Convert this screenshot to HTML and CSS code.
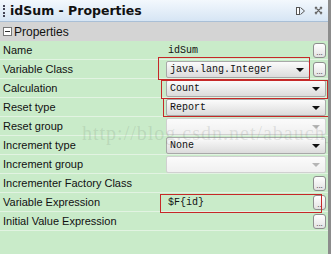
FILE: index.html
```html
<!DOCTYPE html>
<html lang="en">
<head>
    <meta charset="UTF-8">
    <title>idSum - Properties</title>
    <link rel="stylesheet" href="styles.css">
</head>
<body>
    <div class="panel">
        <div class="titlebar">
            <span class="grip"></span>
            <span class="title">idSum - Properties</span>
            <span class="tools">
                <svg width="10" height="10" viewBox="0 0 10 10"><rect x="0.5" y="1.5" width="3" height="7" fill="#fff" stroke="#555"/><path d="M4.5 1.5 L8.5 5 L4.5 8.5" fill="none" stroke="#555"/></svg>
                <svg width="9" height="9" viewBox="0 0 9 9"><path d="M1 1 L8 8 M8 1 L1 8 M1 3 L3 1 M6 8 L8 6 M6 1 L8 3 M1 6 L3 8" stroke="#666" stroke-width="1.2"/></svg>
            </span>
        </div>
        <div class="section"><span class="minus"></span>Properties</div>

        <div class="rows">
            <div class="row">
                <div class="label">Name</div>
                <div class="value"><span class="text">idSum</span><span class="dots">...</span></div>
            </div>
            <div class="row">
                <div class="label">Variable Class</div>
                <div class="value"><span class="combo">java.lang.Integer<i class="arrow"></i></span><span class="dots">...</span></div>
            </div>
            <div class="row">
                <div class="label">Calculation</div>
                <div class="value"><span class="combo">Count<i class="arrow"></i></span></div>
            </div>
            <div class="row">
                <div class="label">Reset type</div>
                <div class="value"><span class="combo">Report<i class="arrow"></i></span></div>
            </div>
            <div class="row">
                <div class="label">Reset group</div>
                <div class="value"><span class="combo disabled"><i class="arrow"></i></span></div>
            </div>
            <div class="row">
                <div class="label">Increment type</div>
                <div class="value"><span class="combo">None<i class="arrow"></i></span></div>
            </div>
            <div class="row">
                <div class="label">Increment group</div>
                <div class="value"><span class="combo disabled"><i class="arrow"></i></span></div>
            </div>
            <div class="row">
                <div class="label">Incrementer Factory Class</div>
                <div class="value"><span class="text"></span><span class="dots">...</span></div>
            </div>
            <div class="row">
                <div class="label">Variable Expression</div>
                <div class="value"><span class="text">$F{id}</span><span class="dots">..</span></div>
            </div>
            <div class="row">
                <div class="label">Initial Value Expression</div>
                <div class="value"><span class="text"></span><span class="dots">...</span></div>
            </div>
        </div>

        <!-- marcas vermelhas por cima -->
        <div class="mark mark-class"></div>
        <div class="mark mark-calc"></div>
        <div class="mark mark-reset"></div>
        <div class="mark mark-expr"></div>
        <div class="watermark">http://blog.csdn.net/abauch_d</div>
    </div>
</body>
</html>
```

FILE: styles.css
```css
body {
    margin: 0;
    padding: 0;
    font-family: "DejaVu Sans", Tahoma, sans-serif;
    background-color: #c9ebc9;
}
.panel {
    position: relative;
    width: 331px;
    height: 254px;
    overflow: hidden;
    background-color: #c9ebc9;
    border-right: 3px solid #8c8c8c;
    box-sizing: border-box;
}
.titlebar {
    height: 22px;
    display: flex;
    align-items: center;
    background: linear-gradient(#f3f8fd, #d6e5f4);
    border-bottom: 1px solid #a9bfd6;
    box-sizing: border-box;
}
.grip {
    width: 2px;
    height: 12px;
    margin: 0 5px 0 3px;
    border-left: 2px dotted #445;
    box-sizing: border-box;
}
.title {
    font-weight: bold;
    font-size: 12.5px;
    color: #111;
    flex: 1;
}
.tools {
    display: flex;
    align-items: center;
    gap: 8px;
    margin-right: 5px;
}
.section {
    height: 19px;
    display: flex;
    align-items: center;
    background-color: #d4d4d4;
    font-family: "Liberation Sans", Arial, sans-serif;
    font-size: 12px;
    color: #111;
}
.minus {
    position: relative;
    width: 9px;
    height: 9px;
    margin: 0 2px 0 3px;
    border: 1px solid #777;
    background-color: #fff;
    box-sizing: border-box;
}
.minus::after {
    content: "";
    position: absolute;
    left: 1px;
    right: 1px;
    top: 3px;
    height: 1px;
    background-color: #333;
}
.row {
    display: flex;
    height: 19px;
    border-bottom: 1px solid #e2f3e2;
    box-sizing: border-box;
}
.label {
    width: 161px;
    padding-left: 3px;
    font-family: "Liberation Sans", Arial, sans-serif;
    font-size: 11px;
    line-height: 18px;
    color: #111;
    white-space: nowrap;
}
.value {
    flex: 1;
    display: flex;
    align-items: center;
    padding-right: 2px;
    font-family: "Liberation Mono", monospace;
    font-size: 10px;
    color: #111;
}
.text {
    flex: 1;
    padding-left: 4px;
}
.combo {
    flex: 1;
    position: relative;
    height: 15px;
    margin-left: 2px;
    padding-left: 3px;
    line-height: 15px;
    background: linear-gradient(#fbfbfb, #dcdcdc);
    border: 1px solid #a8a8a8;
    border-radius: 2px;
}
.combo.disabled {
    background: linear-gradient(#fbfbfb, #f0f0f0);
    border-color: #d0d0d0;
}
.arrow {
    position: absolute;
    right: 5px;
    top: 6px;
    border-left: 4px solid transparent;
    border-right: 4px solid transparent;
    border-top: 4px solid #111;
}
.disabled .arrow {
    border-top-color: #b5b5b5;
}
.dots {
    width: 13px;
    height: 15px;
    margin-left: 3px;
    border: 1px solid #8e8e8e;
    border-radius: 3px;
    background: linear-gradient(#ffffff, #e2e2e2);
    font-family: "Liberation Sans", Arial, sans-serif;
    font-size: 8px;
    line-height: 17px;
    text-align: center;
    color: #222;
    overflow: hidden;
    box-sizing: border-box;
}
.mark {
    position: absolute;
    border: 1px solid #c62828;
    box-sizing: border-box;
}
.mark-class {
    left: 158px;
    top: 57px;
    width: 152px;
    height: 23px;
}
.mark-calc {
    left: 161px;
    top: 80px;
    width: 167px;
    height: 19px;
}
.mark-reset {
    left: 163px;
    top: 98px;
    width: 168px;
    height: 19px;
}
.mark-expr {
    left: 160px;
    top: 194px;
    width: 162px;
    height: 19px;
}
.watermark {
    position: absolute;
    left: 82px;
    top: 122px;
    font-family: "Liberation Serif", serif;
    font-size: 20px;
    color: rgba(110, 120, 110, 0.18);
    letter-spacing: 1px;
    white-space: nowrap;
}
```
